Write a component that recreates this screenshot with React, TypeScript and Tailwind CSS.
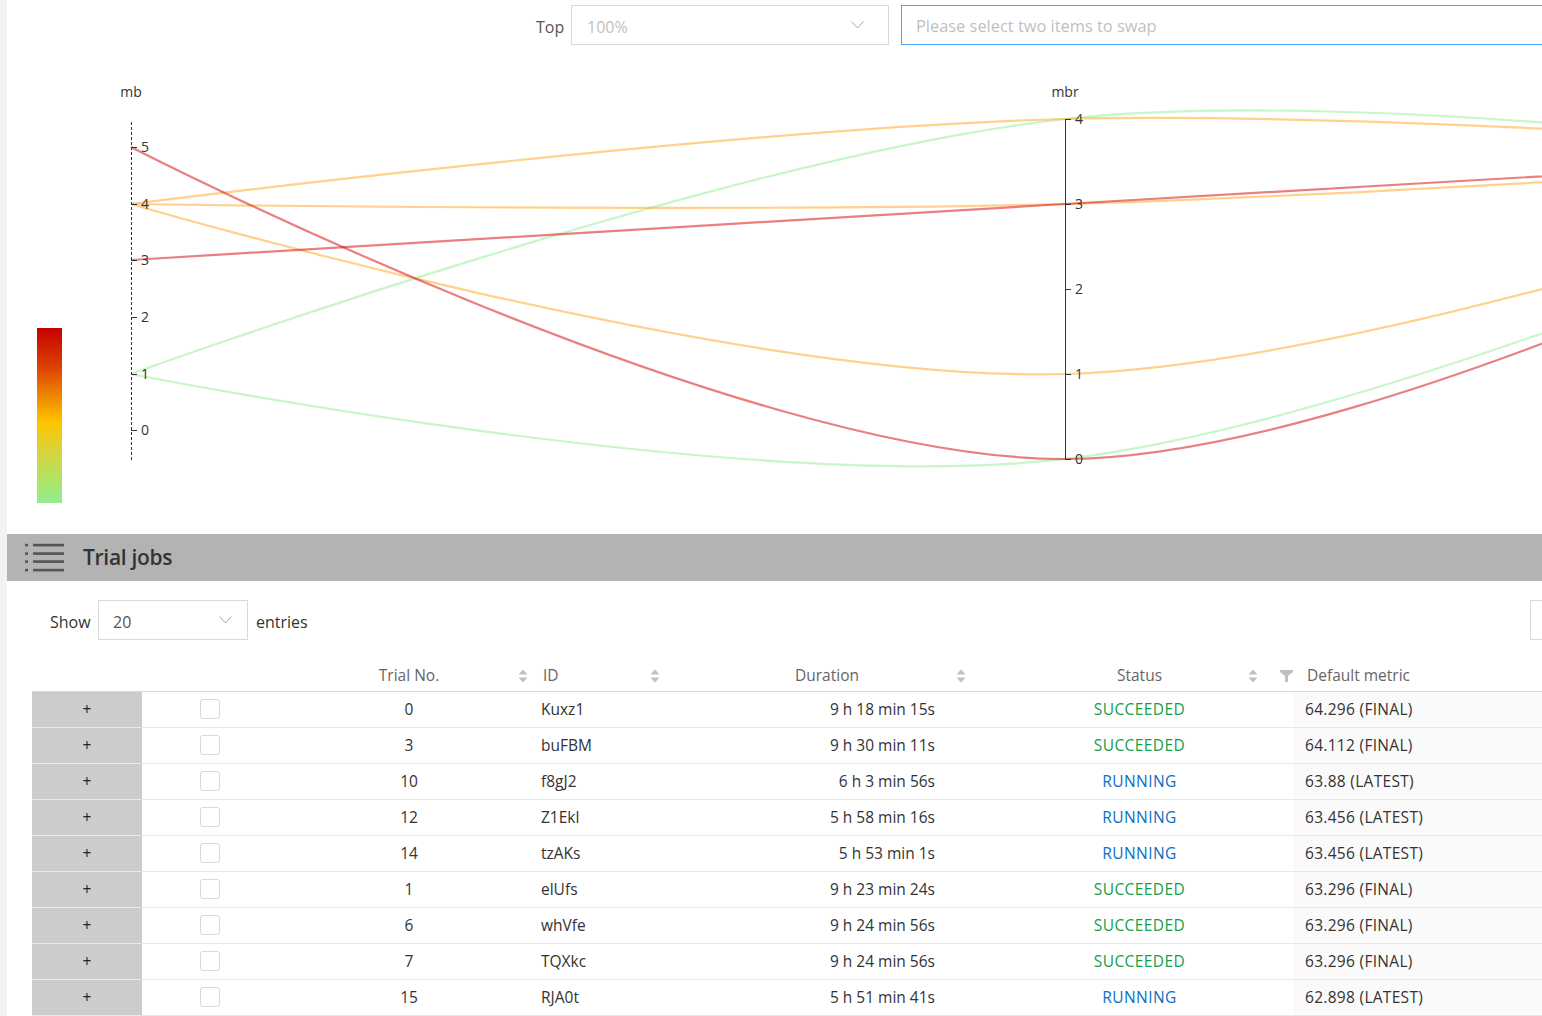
import { useMemo } from "react";

type Pt = [number, number];

const AXIS_X = [131, 1065, 1999];
const SMOOTH = 0.35;

// parallel lines: y on mb axis, y on mbr axis, y on the (offscreen) third axis
const lines = [
  { color: "#90ee90", ys: [374, 119, 170] },
  { color: "#90ee90", ys: [374, 459, 154] },
  { color: "#ffa31a", ys: [204, 119, 156] },
  { color: "#ffa31a", ys: [204, 204, 154] },
  { color: "#ffa31a", ys: [204, 374, 149] },
  { color: "#d40000", ys: [147, 459, 140] },
  { color: "#d40000", ys: [260, 204, 150] },
];

const mbTicks = [
  { v: 5, y: 147 },
  { v: 4, y: 204 },
  { v: 3, y: 260 },
  { v: 2, y: 317 },
  { v: 1, y: 374 },
  { v: 0, y: 430 },
];

const mbrTicks = [
  { v: 4, y: 119 },
  { v: 3, y: 204 },
  { v: 2, y: 289 },
  { v: 1, y: 374 },
  { v: 0, y: 459 },
];

const trials = [
  { no: 0, id: "Kuxz1", duration: "9 h 18 min 15s", status: "SUCCEEDED", metric: "64.296 (FINAL)" },
  { no: 3, id: "buFBM", duration: "9 h 30 min 11s", status: "SUCCEEDED", metric: "64.112 (FINAL)" },
  { no: 10, id: "f8gJ2", duration: "6 h 3 min 56s", status: "RUNNING", metric: "63.88 (LATEST)" },
  { no: 12, id: "Z1Ekl", duration: "5 h 58 min 16s", status: "RUNNING", metric: "63.456 (LATEST)" },
  { no: 14, id: "tzAKs", duration: "5 h 53 min 1s", status: "RUNNING", metric: "63.456 (LATEST)" },
  { no: 1, id: "elUfs", duration: "9 h 23 min 24s", status: "SUCCEEDED", metric: "63.296 (FINAL)" },
  { no: 6, id: "whVfe", duration: "9 h 24 min 56s", status: "SUCCEEDED", metric: "63.296 (FINAL)" },
  { no: 7, id: "TQXkc", duration: "9 h 24 min 56s", status: "SUCCEEDED", metric: "63.296 (FINAL)" },
  { no: 15, id: "RJA0t", duration: "5 h 51 min 41s", status: "RUNNING", metric: "62.898 (LATEST)" },
];

// same idea as echarts smoothBezier: ends keep their own point as control
function smoothPath(pts: Pt[]) {
  const cps: Pt[] = [];
  for (let i = 0; i < pts.length; i++) {
    const p = pts[i];
    if (i === 0 || i === pts.length - 1) {
      cps.push(p, p);
      continue;
    }
    const prev = pts[i - 1];
    const next = pts[i + 1];
    const vx = (next[0] - prev[0]) * SMOOTH;
    const vy = (next[1] - prev[1]) * SMOOTH;
    let d0 = Math.hypot(p[0] - prev[0], p[1] - prev[1]);
    let d1 = Math.hypot(p[0] - next[0], p[1] - next[1]);
    const sum = d0 + d1;
    d0 /= sum;
    d1 /= sum;
    cps.push([p[0] - vx * d0, p[1] - vy * d0], [p[0] + vx * d1, p[1] + vy * d1]);
  }
  let d = `M${pts[0][0]} ${pts[0][1]}`;
  for (let i = 0; i < pts.length - 1; i++) {
    const c1 = cps[2 * i + 1];
    const c2 = cps[2 * (i + 1)];
    const e = pts[i + 1];
    d += ` C${c1[0].toFixed(1)} ${c1[1].toFixed(1)} ${c2[0].toFixed(1)} ${c2[1].toFixed(1)} ${e[0]} ${e[1]}`;
  }
  return d;
}

const Chevron = () => (
  <svg width="13" height="8" viewBox="0 0 13 8" fill="none" className="shrink-0">
    <path d="M0.5 0.5 L6.5 7 L12.5 0.5" stroke="#a6a6a6" strokeWidth="1" />
  </svg>
);

const Sorter = () => (
  <svg width="10" height="14" viewBox="0 0 10 14">
    <path d="M5 0.5 L9.5 5.5 L0.5 5.5 Z" fill="#bfbfbf" />
    <path d="M0.5 8.5 L9.5 8.5 L5 13.5 Z" fill="#bfbfbf" />
  </svg>
);

const Funnel = () => (
  <svg width="13" height="12" viewBox="0 0 13 12">
    <path d="M0 0 H13 V2 L8 6 V12 H5 V6 L0 2 Z" fill="#bfbfbf" />
  </svg>
);

const ListIcon = () => (
  <svg width="40" height="30" viewBox="0 0 40 30" className="shrink-0">
    {[2, 10.5, 18.5, 27].map((y) => (
      <g key={y}>
        <rect x="0" y={y - 1.2} width="3" height="2.6" fill="#555" />
        <rect x="8" y={y - 1.2} width="31" height="2.6" fill="#555" />
      </g>
    ))}
  </svg>
);

const ParallelChart = () => {
  const paths = useMemo(
    () =>
      lines.map((l) => ({
        color: l.color,
        d: smoothPath(l.ys.map((y, i) => [AXIS_X[i], y] as Pt)),
      })),
    []
  );

  return (
    <svg width="1535" height="489" viewBox="7 45 1535 489" className="block shrink-0">
      <defs>
        <linearGradient id="vmap" x1="0" y1="0" x2="0" y2="1">
          <stop offset="0%" stopColor="#c80000" />
          <stop offset="22%" stopColor="#dc4000" />
          <stop offset="38%" stopColor="#ec8400" />
          <stop offset="54%" stopColor="#ffc400" />
          <stop offset="70%" stopColor="#d8d43c" />
          <stop offset="86%" stopColor="#b2e264" />
          <stop offset="100%" stopColor="#90ee90" />
        </linearGradient>
      </defs>

      <rect x="37" y="328" width="25" height="175" fill="url(#vmap)" />

      {paths.map((p, i) => (
        <path key={i} d={p.d} fill="none" stroke={p.color} strokeOpacity="0.5" strokeWidth="2.2" />
      ))}

      <g fontFamily="'Open Sans', sans-serif" fontSize="14" fill="#333">
        <text x="131" y="97" textAnchor="middle">mb</text>
        <text x="1065" y="97" textAnchor="middle">mbr</text>
      </g>

      {/* mb axis */}
      <line x1="131.5" y1="122" x2="131.5" y2="460" stroke="#333" strokeWidth="1" strokeDasharray="3 2" />
      {mbTicks.map((t) => (
        <g key={t.v}>
          <line x1="131" y1={t.y + 0.5} x2="137" y2={t.y + 0.5} stroke="#333" />
          <text x="141" y={t.y + 5} fontSize="14" fill="#333" fontFamily="'Open Sans', sans-serif">
            {t.v}
          </text>
        </g>
      ))}

      {/* mbr axis */}
      <line x1="1065.5" y1="119" x2="1065.5" y2="460" stroke="#333" strokeWidth="1" />
      {mbrTicks.map((t) => (
        <g key={t.v}>
          <line x1="1065" y1={t.y + 0.5} x2="1071" y2={t.y + 0.5} stroke="#333" />
          <text x="1075" y={t.y + 5} fontSize="14" fill="#333" fontFamily="'Open Sans', sans-serif">
            {t.v}
          </text>
        </g>
      ))}
    </svg>
  );
};

export default function App() {
  return (
    <div className="flex h-screen w-screen overflow-hidden bg-white font-['Open_Sans',sans-serif] text-[15.5px] text-[#333]">
      <div className="w-[7px] shrink-0 bg-[#f2f2f2]" />

      <div className="flex min-w-0 flex-1 flex-col overflow-hidden">
        {/* top controls */}
        <div className="flex w-[1760px] shrink-0 items-center pl-[529px] pt-[5px]">
          <span className="mr-[7px] w-[28px] shrink-0 pt-[3px] text-[16px] text-[#555]">Top</span>
          <div className="flex h-[40px] w-[318px] shrink-0 items-center justify-between border border-[#d9d9d9] pl-[15px] pr-[24px] text-[16px] text-[#bfbfbf]">
            <span className="pt-[3px]">100%</span>
            <Chevron />
          </div>
          <div className="ml-[12px] flex h-[40px] w-[830px] shrink-0 items-center border border-[#40a9ff] pl-[14px] text-[16.4px] text-[#bfbfbf]">
            <span className="pt-[3px]">Please select two items to swap</span>
          </div>
        </div>

        <ParallelChart />

        {/* section header */}
        <div className="flex h-[47px] w-[1700px] shrink-0 items-center gap-[18px] bg-[#b3b3b3] pl-[18px]">
          <ListIcon />
          <span className="pt-[1px] text-[21px] font-semibold tracking-[-0.3px] text-[#333]">Trial jobs</span>
        </div>

        {/* show entries */}
        <div className="mt-[19px] flex w-[1723px] shrink-0 items-center pl-[43px]">
          <span className="w-[41px] shrink-0 pt-[3px] text-[16px]">Show</span>
          <div className="ml-[7px] flex h-[40px] w-[150px] shrink-0 items-center justify-between border border-[#d9d9d9] pl-[14px] pr-[15px] text-[16px] text-[#555]">
            <span className="pt-[3px]">20</span>
            <Chevron />
          </div>
          <span className="ml-[8px] shrink-0 pt-[3px] text-[16px]">entries</span>
          <div className="flex-1" />
          <div className="h-[40px] w-[200px] shrink-0 border border-[#d9d9d9]" />
        </div>

        {/* table */}
        <table className="ml-[25px] mt-[20px] w-[1662px] shrink-0 table-fixed border-collapse">
          <colgroup>
            <col className="w-[110px]" />
            <col className="w-[137px]" />
            <col className="w-[260px]" />
            <col className="w-[129px]" />
            <col className="w-[318px]" />
            <col className="w-[307px]" />
            <col className="w-[401px]" />
          </colgroup>
          <thead>
            <tr className="h-[31px] border-b border-[#d9d9d9] text-[#666]">
              <th />
              <th />
              <th className="relative pt-[1px] text-center font-normal">
                Trial No.
                <span className="absolute right-[11px] top-[9px]"><Sorter /></span>
              </th>
              <th className="relative pl-[4px] pt-[1px] text-left font-normal">
                ID
                <span className="absolute right-[8px] top-[9px]"><Sorter /></span>
              </th>
              <th className="relative pt-[1px] text-center font-normal">
                Duration
                <span className="absolute right-[20px] top-[9px]"><Sorter /></span>
              </th>
              <th className="relative pt-[1px] text-center font-normal">
                Status
                <span className="absolute right-[35px] top-[9px]"><Sorter /></span>
                <span className="absolute right-[0px] top-[10px]"><Funnel /></span>
              </th>
              <th className="pl-[14px] pt-[1px] text-left font-normal">Default metric</th>
            </tr>
          </thead>
          <tbody>
            {trials.map((t) => (
              <tr key={t.no} className="h-[36px] border-b border-[#e8e8e8]">
                <td className="bg-[#cccccc] pt-[1px] text-center text-[#222]">+</td>
                <td>
                  <div className="ml-[58px] h-[20px] w-[20px] rounded-[3px] border border-[#d9d9d9] bg-white" />
                </td>
                <td className="pt-[1px] text-center">{t.no}</td>
                <td className="pl-[2px] pt-[1px]">{t.id}</td>
                <td className="pr-[51px] pt-[1px] text-right">{t.duration}</td>
                <td
                  className={`pt-[1px] text-center tracking-[0.4px] ${
                    t.status === "SUCCEEDED" ? "text-[#12a04a]" : "text-[#0a70c2]"
                  }`}
                >
                  {t.status}
                </td>
                <td className="bg-[#fafafa] pl-[12px] pt-[1px] tracking-[0.3px]">{t.metric}</td>
              </tr>
            ))}
          </tbody>
        </table>
      </div>
    </div>
  );
}
